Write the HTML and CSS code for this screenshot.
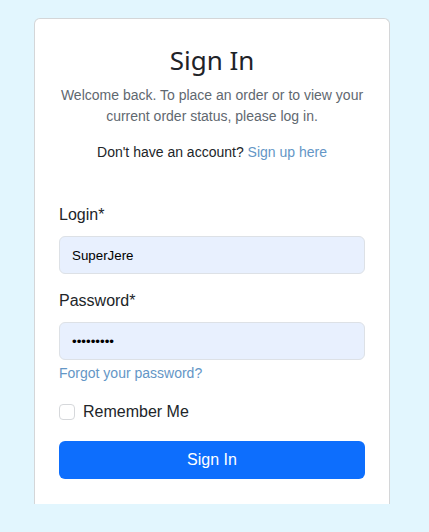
FILE: index.html
```html
<!DOCTYPE html>
<html lang="en">
<head>
<meta charset="utf-8">
<title>Sign In</title>
<link rel="stylesheet" href="styles.css">
</head>
<body>
<div class="page">
  <div class="card">
    <h1 class="title">Sign In</h1>
    <p class="intro">Welcome back. To place an order or to view your current order status, please log in.</p>
    <p class="signup">Don't have an account? <a href="#" class="link">Sign up here</a></p>
    <form class="form">
      <label class="label" for="login">Login*</label>
      <input class="input" id="login" type="text" value="SuperJere">
      <label class="label label-pw" for="pw">Password*</label>
      <input class="input" id="pw" type="password" value="123456789">
      <a href="#" class="link forgot">Forgot your password?</a>
      <div class="remember">
        <span class="check"></span>
        <span class="remember-text">Remember Me</span>
      </div>
      <button type="button" class="btn">Sign In</button>
    </form>
  </div>
</div>
</body>
</html>
```

FILE: styles.css
```css
* { box-sizing: border-box; }
html, body { margin: 0; padding: 0; }
body {
  background: #e2f6fe;
  font-family: "Liberation Sans", Arial, sans-serif;
  color: #212529;
  height: 532px;
  overflow: hidden;
}
.page {
  padding: 18px 0 0 34px;
}
.card {
  width: 356px;
  height: 486px;
  background: #fff;
  border: 1px solid #d4d6d8;
  border-bottom: none;
  border-radius: 6px 6px 0 0;
  padding: 24px 24px 0 24px;
}
.title {
  margin: 0 0 8px;
  font-family: "Noto Sans", sans-serif;
  font-weight: 400;
  font-size: 26px;
  line-height: 34px;
  text-align: center;
  color: #1f2328;
}
.intro {
  margin: 0 0 15px;
  font-size: 14px;
  line-height: 21px;
  text-align: center;
  color: #5f6870;
}
.signup {
  margin: 0;
  font-size: 14px;
  line-height: 21px;
  text-align: center;
  color: #212529;
}
.link {
  color: #6496c6;
  text-decoration: none;
}
.form {
  display: flex;
  flex-direction: column;
  padding-top: 40px;
}
.label {
  font-size: 16px;
  line-height: 24px;
  margin-bottom: 9px;
}
.label-pw { margin-top: 15px; }
.input {
  height: 38px;
  width: 100%;
  border: 1px solid #dde1e6;
  border-radius: 6px;
  background: #e8f0fe;
  padding: 0 12px;
  font-family: "Liberation Sans", Arial, sans-serif;
  font-size: 13.33px;
  color: #000;
}
.forgot {
  font-size: 14px;
  line-height: 21px;
  margin-top: 3px;
}
.remember {
  display: flex;
  align-items: center;
  gap: 8px;
  margin-top: 16px;
  height: 24px;
}
.check {
  width: 16px;
  height: 16px;
  border: 1px solid #d6d8db;
  border-radius: 4px;
  background: #fff;
}
.remember-text {
  font-size: 16px;
  line-height: 24px;
}
.btn {
  margin-top: 17px;
  height: 38px;
  width: 100%;
  border: none;
  border-radius: 6px;
  background: #0d6efd;
  color: #fff;
  font-family: "Liberation Sans", Arial, sans-serif;
  font-size: 16px;
}
```
